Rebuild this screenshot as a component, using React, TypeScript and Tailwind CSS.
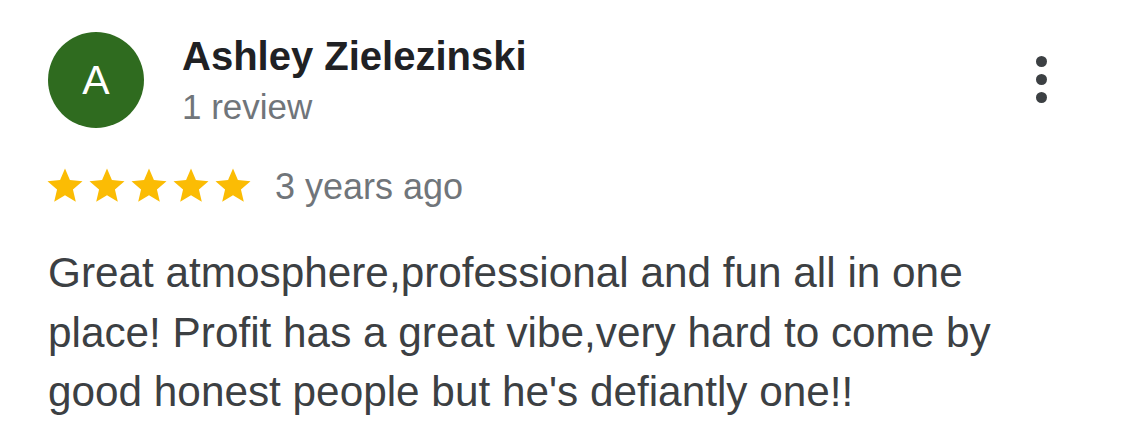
import React from "react";

const Star = () => (
  <svg width="42" height="42" viewBox="0 0 24 24" className="block">
    <path fill="#fbbc04" d="M12 17.27L18.18 21l-1.64-7.03L22 9.24l-7.19-.61L12 2 9.19 8.63 2 9.24l5.46 4.73L5.82 21z" />
  </svg>
);

export default function App() {
  return (
    <div className="w-[1125px] h-[423px] bg-white overflow-hidden font-['Liberation_Sans',Arial,Helvetica,sans-serif]">
      <div className="flex items-start pl-[48px] pr-[78px] pt-[32px]">
        <div className="w-[96px] h-[96px] rounded-full bg-[#2f6b1f] flex items-center justify-center text-white text-[41px] leading-none shrink-0">A</div>
        <div className="ml-[38px] flex-1 flex flex-col">
          <div className="text-[40px] font-bold text-[#202124] leading-[48px]">Ashley Zielezinski</div>
          <div className="text-[35px] text-[#70757a] leading-[42px] mt-[6px]">1 review</div>
        </div>
        <div className="flex flex-col gap-[7px] pt-[24px] shrink-0">
          <span className="block w-[11px] h-[11px] rounded-full bg-[#3c4043]" />
          <span className="block w-[11px] h-[11px] rounded-full bg-[#3c4043]" />
          <span className="block w-[11px] h-[11px] rounded-full bg-[#3c4043]" />
        </div>
      </div>
      <div className="flex items-center pl-[44px] mt-[37px] h-[42px]">
        <div className="flex">
          <Star /><Star /><Star /><Star /><Star />
        </div>
        <div className="ml-[21px] text-[36px] text-[#70757a] leading-[41px]">3 years ago</div>
      </div>
      <div className="pl-[48px] w-[1030px] mt-[36px] text-[42.3px] leading-[59.5px] text-[#3c4043]">
        Great atmosphere,professional and fun all in one place! Profit has a great vibe,very hard to come by good honest people but he's defiantly one!!
      </div>
    </div>
  );
}
